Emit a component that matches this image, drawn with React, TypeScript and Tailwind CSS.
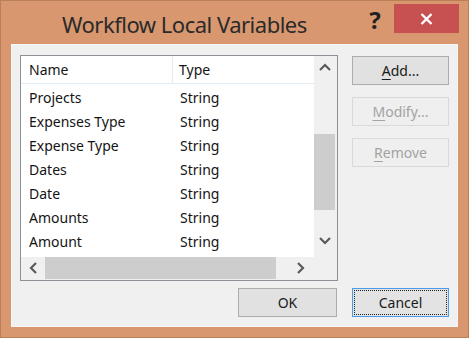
import React from "react";

const rows: [string, string][] = [
  ["Projects", "String"],
  ["Expenses Type", "String"],
  ["Expense Type", "String"],
  ["Dates", "String"],
  ["Date", "String"],
  ["Amounts", "String"],
  ["Amount", "String"],
];

function Chevron({ dir }: { dir: "up" | "down" | "left" | "right" }) {
  const d =
    dir === "up"
      ? "M1 7 L6 2 L11 7"
      : dir === "down"
      ? "M1 2 L6 7 L11 2"
      : dir === "left"
      ? "M7 1 L2 6 L7 11"
      : "M2 1 L7 6 L2 11";
  const w = dir === "up" || dir === "down" ? 12 : 9;
  const h = dir === "up" || dir === "down" ? 9 : 12;
  return (
    <svg width={w} height={h} viewBox={`0 0 ${w} ${h}`}>
      <path d={d} fill="none" stroke="#5a5a5a" strokeWidth="2.2" />
    </svg>
  );
}

function Btn({
  children,
  disabled,
  focused,
  w = "w-[97px]",
}: {
  children: React.ReactNode;
  disabled?: boolean;
  focused?: boolean;
  w?: string;
}) {
  const base = `${w} h-[29px] flex items-center justify-center text-[14px] border`;
  if (disabled)
    return (
      <div className={`${base} border-[#d9d9d9] bg-[#efefef] text-[#a3a3a3]`}>{children}</div>
    );
  if (focused)
    return (
      <div
        className={`${base} border-[#4a9be8] bg-[#e3e3e3] text-[#1a1a1a] outline-1 outline-dotted outline-[#222] outline-offset-[-3px]`}
      >
        {children}
      </div>
    );
  return <div className={`${base} border-[#adadad] bg-[#e1e1e1] text-[#1a1a1a]`}>{children}</div>;
}

export default function App() {
  return (
    <div className="w-[469px] h-[338px] bg-[#d8976f] border border-[#b98058] flex flex-col font-['Noto_Sans',sans-serif] overflow-hidden">
      {/* Title bar */}
      <div className="h-[43px] flex items-start">
        <div className="ml-[61px] mt-[8px] text-[22px] leading-[30px] tracking-[-0.5px] text-[#2a2a2a]">
          Workflow Local Variables
        </div>
        <div className="flex-1" />
        <div className="w-[30px] mt-[5px] text-center text-[24px] leading-[28px] font-bold text-[#222]">?</div>
        <div className="ml-[4px] mt-[3px] mr-[9px] w-[65px] h-[29px] bg-[#c75050] flex items-center justify-center">
          <svg width="13" height="12" viewBox="0 0 13 12">
            <path d="M1.5 1 L11.5 11 M11.5 1 L1.5 11" stroke="#fff" strokeWidth="2.4" />
          </svg>
        </div>
      </div>

      {/* Client area */}
      <div className="mx-[10px] mb-[10px] flex-1 bg-[#f0f0f0] border border-[#f7f7f7] flex flex-col pt-[10px] pl-[8px]">
        <div className="flex">
          {/* List view */}
          <div className="w-[318px] h-[226px] border border-[#8c9198] bg-white flex flex-col">
            <div className="flex h-[201px]">
              <div className="flex-1 flex flex-col text-[14px] text-[#141414]">
                <div className="h-[28px] flex border-b border-[#e3ebf5]">
                  <div className="w-[152px] pl-[8px] border-r border-[#e3ebf5] flex items-center">Name</div>
                  <div className="pl-[6px] flex items-center">Type</div>
                </div>
                <div className="pt-[1px]">
                  {rows.map(([n, t]) => (
                    <div key={n} className="h-[24px] flex items-center">
                      <div className="w-[152px] pl-[8px]">{n}</div>
                      <div className="pl-[7px]">{t}</div>
                    </div>
                  ))}
                </div>
              </div>
              {/* vertical scrollbar */}
              <div className="w-[23px] bg-[#f0f0f0] flex flex-col">
                <div className="h-[22px] flex items-center justify-center pr-[2px]">
                  <Chevron dir="up" />
                </div>
                <div className="flex-1 pt-[56px]">
                  <div className="w-[21px] h-[76px] bg-[#cdcdcd]" />
                </div>
                <div className="h-[28px] flex items-start justify-center pr-[2px] pt-[7px]">
                  <Chevron dir="down" />
                </div>
              </div>
            </div>
            {/* horizontal scrollbar */}
            <div className="flex h-[23px] bg-[#f0f0f0]">
              <div className="w-[24px] h-[22px] flex items-center justify-center">
                <Chevron dir="left" />
              </div>
              <div className="w-[231px] h-[22px] bg-[#cdcdcd]" />
              <div className="w-[12px]" />
              <div className="w-[24px] h-[22px] flex items-center justify-center">
                <Chevron dir="right" />
              </div>
              <div className="flex-1" />
            </div>
          </div>

          {/* buttons */}
          <div className="ml-[14px] mt-[1px] flex flex-col gap-[12px]">
            <Btn>
              <span>
                <span className="underline underline-offset-[3px]">A</span>dd...
              </span>
            </Btn>
            <Btn disabled>
              <span>
                <span className="underline underline-offset-[3px]">M</span>odify...
              </span>
            </Btn>
            <Btn disabled>
              <span>
                <span className="underline underline-offset-[3px]">R</span>emove
              </span>
            </Btn>
          </div>
        </div>

        <div className="mt-[7px] flex justify-end gap-[15px] pr-[8px]">
          <Btn w="w-[99px]">OK</Btn>
          <Btn focused>Cancel</Btn>
        </div>
      </div>
    </div>
  );
}
